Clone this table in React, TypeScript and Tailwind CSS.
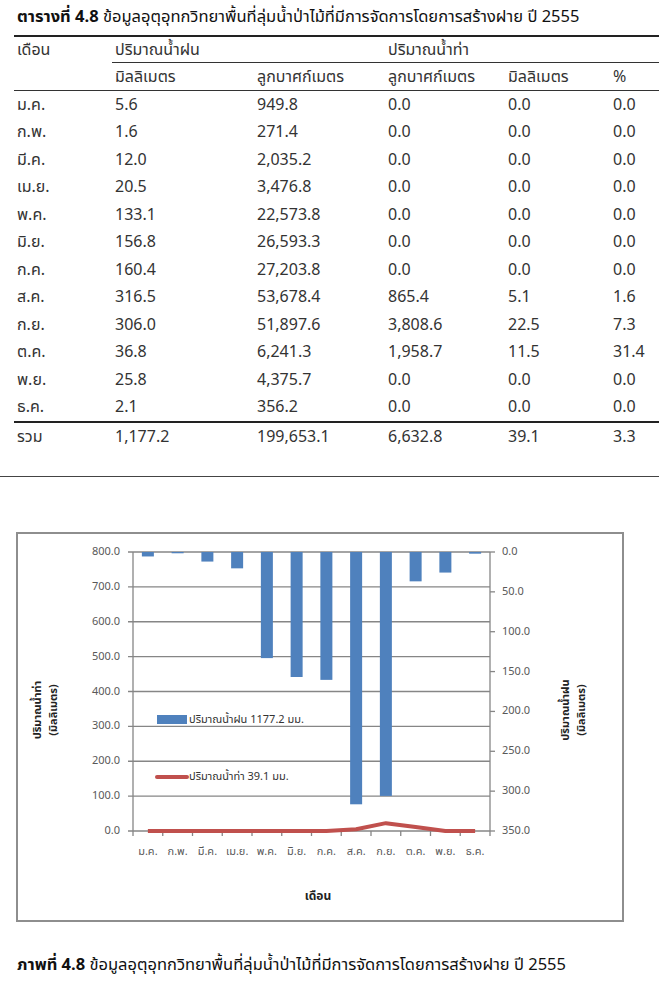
const rows = [
  ["ม.ค.", "5.6", "949.8", "0.0", "0.0", "0.0"],
  ["ก.พ.", "1.6", "271.4", "0.0", "0.0", "0.0"],
  ["มี.ค.", "12.0", "2,035.2", "0.0", "0.0", "0.0"],
  ["เม.ย.", "20.5", "3,476.8", "0.0", "0.0", "0.0"],
  ["พ.ค.", "133.1", "22,573.8", "0.0", "0.0", "0.0"],
  ["มิ.ย.", "156.8", "26,593.3", "0.0", "0.0", "0.0"],
  ["ก.ค.", "160.4", "27,203.8", "0.0", "0.0", "0.0"],
  ["ส.ค.", "316.5", "53,678.4", "865.4", "5.1", "1.6"],
  ["ก.ย.", "306.0", "51,897.6", "3,808.6", "22.5", "7.3"],
  ["ต.ค.", "36.8", "6,241.3", "1,958.7", "11.5", "31.4"],
  ["พ.ย.", "25.8", "4,375.7", "0.0", "0.0", "0.0"],
  ["ธ.ค.", "2.1", "356.2", "0.0", "0.0", "0.0"],
];
const total = ["รวม", "1,177.2", "199,653.1", "6,632.8", "39.1", "3.3"];

const rain = [5.6, 1.6, 12.0, 20.5, 133.1, 156.8, 160.4, 316.5, 306.0, 36.8, 25.8, 2.1];
const runoff = [0, 0, 0, 0, 0, 0, 0, 5.1, 22.5, 11.5, 0, 0];

const grid = "grid grid-cols-[98px_142px_131px_120px_105px_1fr]";

function Row({ cells, className = "" }: { cells: string[]; className?: string }) {
  return (
    <div className={`${grid} items-center ${className}`}>
      {cells.map((c, i) => (
        <span key={i} className="pl-[3px]">
          {c}
        </span>
      ))}
    </div>
  );
}

function Chart() {
  // plot box inside the frame
  const L = 115, R = 472, T = 18, B = 297;
  const slot = (R - L) / 12;
  const h = B - T;
  const months = rows.map((r) => r[0]);
  const line = runoff.map((v, i) => `${L + (i + 0.5) * slot},${B - (v * h) / 800}`).join(" ");
  return (
    <svg width="604" height="386" className="block" fontFamily="'Noto Sans Thai', 'Noto Sans', sans-serif">
      {Array.from({ length: 9 }).map((_, i) => {
        const y = B - (i * h) / 8;
        return (
          <g key={i}>
            <line x1={L - 5} x2={R} y1={y} y2={y} stroke="#868686" strokeWidth="1.3" />
            <text x={L - 13} y={y} textAnchor="end" dominantBaseline="middle" fontSize="11" fill="#595959">
              {(i * 100).toFixed(1)}
            </text>
          </g>
        );
      })}
      {Array.from({ length: 8 }).map((_, i) => {
        const y = T + (i * h) / 7;
        return (
          <g key={i}>
            <line x1={R} x2={R + 5} y1={y} y2={y} stroke="#868686" strokeWidth="1.3" />
            <text x={R + 12} y={y} dominantBaseline="middle" fontSize="11" fill="#595959">
              {(i * 50).toFixed(1)}
            </text>
          </g>
        );
      })}
      {Array.from({ length: 13 }).map((_, i) => (
        <line key={i} x1={L + i * slot} x2={L + i * slot} y1={B} y2={B + 5} stroke="#868686" strokeWidth="1.3" />
      ))}
      <line x1={L} x2={L} y1={T} y2={B} stroke="#868686" strokeWidth="1.3" />
      <line x1={R} x2={R} y1={T} y2={B} stroke="#868686" strokeWidth="1.3" />
      {rain.map((v, i) => (
        <rect key={i} x={L + (i + 0.5) * slot - 6} y={T} width="12" height={(v * h) / 350} fill="#4f81bd" />
      ))}
      <polyline points={line} fill="none" stroke="#c0504d" strokeWidth="4" strokeLinejoin="round" />
      {months.map((m, i) => (
        <text key={m} x={L + (i + 0.5) * slot} y={318} textAnchor="middle" dominantBaseline="middle" fontSize="11" fill="#595959">
          {m}
        </text>
      ))}
      <text x={300} y={363} textAnchor="middle" dominantBaseline="middle" fontSize="12" fontWeight="bold" fill="#222">
        เดือน
      </text>
      <rect x={139} y={181} width="30" height="9" fill="#4f81bd" />
      <text x={171} y={186} dominantBaseline="middle" fontSize="11" fill="#333">
        ปริมาณน้ำฝน 1177.2 มม.
      </text>
      <line x1={139} x2={169} y1={243} y2={243} stroke="#c0504d" strokeWidth="4" strokeLinecap="round" />
      <text x={171} y={243} dominantBaseline="middle" fontSize="11" fill="#333">
        ปริมาณน้ำท่า 39.1 มม.
      </text>
      <text transform="translate(27,176) rotate(-90)" textAnchor="middle" fontSize="11" fontWeight="bold" fill="#222">
        <tspan x="0" y="-4">ปริมาณน้ำท่า</tspan>
        <tspan x="0" y="12">(มิลลิเมตร)</tspan>
      </text>
      <text transform="translate(555,176) rotate(-90)" textAnchor="middle" fontSize="11" fontWeight="bold" fill="#222">
        <tspan x="0" y="-4">ปริมาณน้ำฝน</tspan>
        <tspan x="0" y="12">(มิลลิเมตร)</tspan>
      </text>
    </svg>
  );
}

export default function App() {
  return (
    <div className="min-h-[1000px] w-[659px] overflow-hidden bg-white pt-[5px] text-[16px] leading-[24px] text-[#333] [font-family:'Noto_Sans_Thai','Noto_Sans',sans-serif]">
      <p className="pl-[17px] text-[16.5px] text-[#111]">
        <b>ตารางที่ 4.8</b> ข้อมูลอุตุอุทกวิทยาพื้นที่ลุ่มน้ำป่าไม้ที่มีการจัดการโดยการสร้างฝาย ปี 2555
      </p>

      <div className="ml-[14px] mt-[6px] border-t-2 border-[#222]">
        <div className={`${grid} h-[25px] items-center`}>
          <span className="pl-[3px]">เดือน</span>
          <span className="col-span-2 pl-[3px]">ปริมาณน้ำฝน</span>
          <span className="col-span-3 pl-[3px]">ปริมาณน้ำท่า</span>
        </div>
        <div className="ml-[98px] border-t border-[#333]" />
        <Row cells={["", "มิลลิเมตร", "ลูกบาศก์เมตร", "ลูกบาศก์เมตร", "มิลลิเมตร", "%"]} className="h-[27px]" />
        <div className="border-t-[1.5px] border-[#333]" />
        {rows.map((r) => (
          <Row key={r[0]} cells={r} className="h-[27.5px]" />
        ))}
        <div className="border-t-2 border-[#222]" />
        <Row cells={total} className="h-[28px]" />
      </div>
      <div className="mt-[25px] border-t border-[#444]" />

      <div className="ml-[16px] mt-[55px] w-[608px] border-2 border-[#8e8e8e]">
        <Chart />
      </div>

      <p className="mt-[31px] pl-[17px] text-[16.5px] text-[#111]">
        <b>ภาพที่ 4.8</b> ข้อมูลอุตุอุทกวิทยาพื้นที่ลุ่มน้ำป่าไม้ที่มีการจัดการโดยการสร้างฝาย ปี 2555
      </p>
    </div>
  );
}
